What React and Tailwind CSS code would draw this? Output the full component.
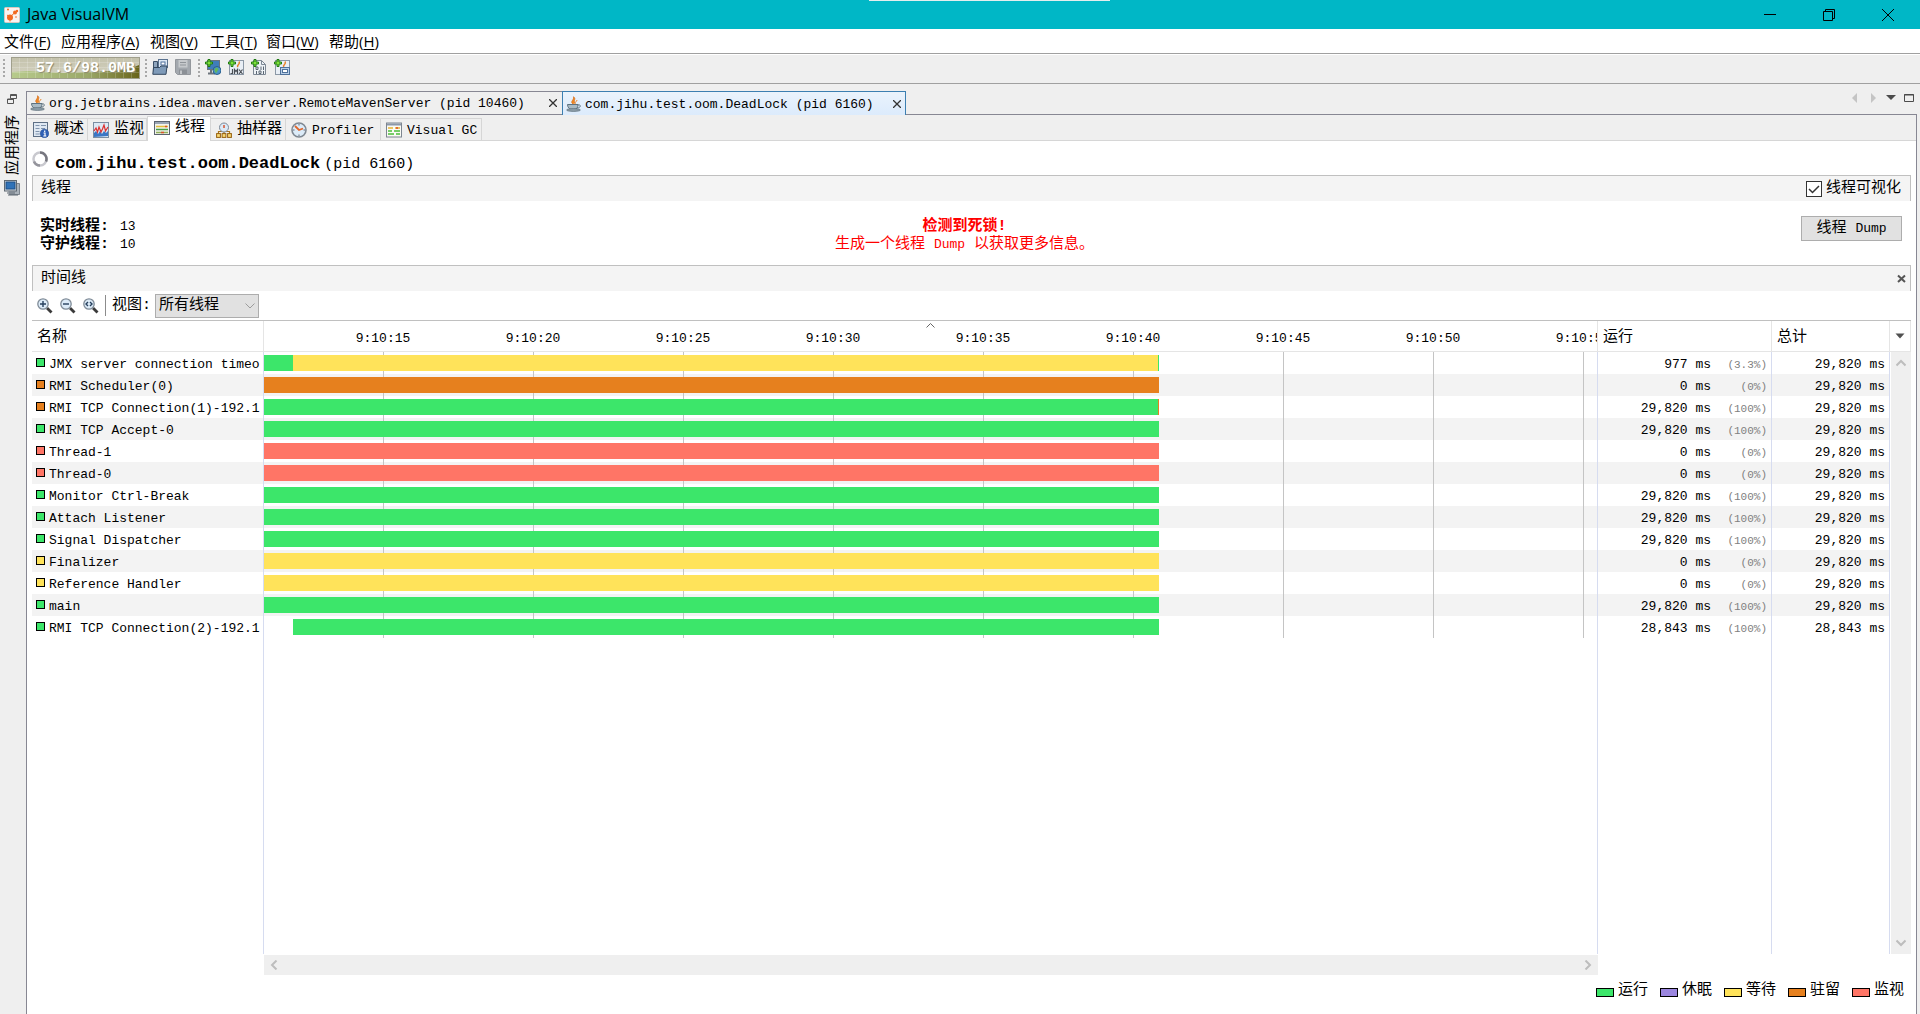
import React from 'react';

const COLORS = {
  run: 'bg-[#3ce66a]',
  sleep: 'bg-[#9b86df]',
  wait: 'bg-[#ffe35a]',
  park: 'bg-[#e6801e]',
  monitor: 'bg-[#ff7566]',
};

const MENUS = [
  ['文件', 'F', 'w-[57px]'],
  ['应用程序', 'A', 'w-[89px]'],
  ['视图', 'V', 'w-[60px]'],
  ['工具', 'T', 'w-[56px]'],
  ['窗口', 'W', 'w-[63px]'],
  ['帮助', 'H', 'w-[60px]'],
];

// seconds on the timeline, 30px each
const PX_PER_SECOND = 30;
const FULL = 895 / PX_PER_SECOND;
const LATE = 29 / PX_PER_SECOND;

const THREADS = [
  { name: 'JMX server connection timeo', state: 'run', bars: [['run', LATE], ['wait', FULL - LATE - 1 / 30], ['run', 1 / 30]], run: '977 ms', pct: '(3.3%)', total: '29,820 ms' },
  { name: 'RMI Scheduler(0)', state: 'park', bars: [['park', FULL]], run: '0 ms', pct: '(0%)', total: '29,820 ms' },
  { name: 'RMI TCP Connection(1)-192.1', state: 'park', bars: [['run', FULL - 1 / 30], ['park', 1 / 30]], run: '29,820 ms', pct: '(100%)', total: '29,820 ms' },
  { name: 'RMI TCP Accept-0', state: 'run', bars: [['run', FULL]], run: '29,820 ms', pct: '(100%)', total: '29,820 ms' },
  { name: 'Thread-1', state: 'monitor', bars: [['monitor', FULL]], run: '0 ms', pct: '(0%)', total: '29,820 ms' },
  { name: 'Thread-0', state: 'monitor', bars: [['monitor', FULL]], run: '0 ms', pct: '(0%)', total: '29,820 ms' },
  { name: 'Monitor Ctrl-Break', state: 'run', bars: [['run', FULL]], run: '29,820 ms', pct: '(100%)', total: '29,820 ms' },
  { name: 'Attach Listener', state: 'run', bars: [['run', FULL]], run: '29,820 ms', pct: '(100%)', total: '29,820 ms' },
  { name: 'Signal Dispatcher', state: 'run', bars: [['run', FULL]], run: '29,820 ms', pct: '(100%)', total: '29,820 ms' },
  { name: 'Finalizer', state: 'wait', bars: [['wait', FULL]], run: '0 ms', pct: '(0%)', total: '29,820 ms' },
  { name: 'Reference Handler', state: 'wait', bars: [['wait', FULL]], run: '0 ms', pct: '(0%)', total: '29,820 ms' },
  { name: 'main', state: 'run', bars: [['run', FULL]], run: '29,820 ms', pct: '(100%)', total: '29,820 ms' },
  { name: 'RMI TCP Connection(2)-192.1', state: 'run', bars: [[null, LATE], ['run', FULL - LATE]], run: '28,843 ms', pct: '(100%)', total: '28,843 ms' },
];

const TICKS = ['9:10:15', '9:10:20', '9:10:25', '9:10:30', '9:10:35', '9:10:40', '9:10:45', '9:10:50', '9:10:55'];

const LEGEND = [
  ['run', '运行'],
  ['sleep', '休眠'],
  ['wait', '等待'],
  ['park', '驻留'],
  ['monitor', '监视'],
];

function Svg({ size = 'size-4', box = '0 0 16 16', children }) {
  return (
    <svg className={`${size} shrink-0`} viewBox={box} fill="none" aria-hidden="true">
      {children}
    </svg>
  );
}

function AppIcon() {
  return (
    <Svg>
      <rect x="0.5" y="0.5" width="15" height="15" rx="1" fill="#f8f4f2" stroke="#d8c8c0" />
      <circle cx="6" cy="10.500" r="3" fill="#f26a21" />
      <circle cx="11" cy="5.500" r="2" fill="#f26a21" />
      <circle cx="4" cy="2.500" r="1" fill="#f26a21" />
      <circle cx="13" cy="4" r="1.200" fill="#f26a21" />
      <circle cx="12" cy="10" r="0.800" fill="#f26a21" />
      <path d="M6 10l5-4.500M6 10L3 8M6 10v4.500" stroke="#f26a21" />
    </Svg>
  );
}

function PlusBadge() {
  return <path d="M3 .5h2V3h2.500v2H5v2.500H3V5H.5V3H3z" fill="#7fe03a" stroke="#1f7a12" />;
}

function OpenIcon() {
  return (
    <Svg>
      <path d="M1.500 14.500v-12h4v7" fill="#8fa5bd" stroke="#3c5068" />
      <rect x="6.500" y="0.500" width="9" height="8" fill="#dce8f5" stroke="#5b7390" />
      <rect x="9" y="3" width="4" height="3" fill="#fff" stroke="#4c6f9c" />
      <path d="M.8 15.300l.7-6.800h6l1.500-1.500h6l-1 8.300z" fill="#7e9ab8" stroke="#33475e" />
    </Svg>
  );
}

function SaveIcon() {
  return (
    <Svg>
      <path d="M.5 .5h15v15h-13l-2-2z" fill="#a3a8ae" stroke="#93979c" />
      <rect x="3.500" y="1" width="9" height="7.500" fill="#c6c9cc" />
      <path d="M5 3.500h6M5 6h6" stroke="#90959a" />
      <rect x="4" y="10.500" width="8" height="4.500" fill="#8b9096" />
      <rect x="5" y="11.500" width="2" height="3.500" fill="#c3c6c9" />
    </Svg>
  );
}

function AddHostIcon() {
  return (
    <Svg>
      <rect x="2.500" y="1.500" width="12" height="9" fill="#3f7dba" stroke="#6c747c" />
      <path d="M3 14.500h7M6 11v3" stroke="#6c747c" strokeWidth="2" />
      <circle cx="12" cy="11.500" r="4" fill="#4a92c9" stroke="#2b5f8c" />
      <path d="M10 9.500l2-1 1.500 2-1.500 2-1 2-1.500-3z" fill="#62b75a" />
      <PlusBadge />
    </Svg>
  );
}

function AddJmxIcon() {
  return (
    <Svg>
      <rect x="1.500" y="1.500" width="14" height="14" fill="#e9eff6" stroke="#8b98a6" />
      <path d="M10 8c-2-2 3-2.500 1-5.500" stroke="#e8822a" strokeWidth="1.500" />
      <path d="M4.500 10v4.500h-2M6.500 15v-4.500l1.500 2 1.500-2V15M11 10.500l3.500 4.500M14.500 10.500L11 15" stroke="#4a4f55" strokeWidth="1.200" />
      <PlusBadge />
    </Svg>
  );
}

function AddDumpIcon() {
  return (
    <Svg>
      <path d="M2.500 1.500h8l4 4v10h-12z" fill="#eef2f6" stroke="#7d8894" />
      <path d="M10.500 1.500v4h4" stroke="#7d8894" />
      <path d="M5 8v2.500h2V8zM10 7.500v3.500M12.500 7.500v3.500M5.500 12v3M8 12v2.500h2V12zM12.500 12v3" stroke="#5a6673" />
      <PlusBadge />
    </Svg>
  );
}

function AddSnapshotIcon() {
  return (
    <Svg>
      <rect x="1.500" y="1.500" width="14" height="14" fill="#e9eff6" stroke="#8b98a6" />
      <path d="M10 8c-2-2 3-2.500 1-5.500" stroke="#e8822a" strokeWidth="1.500" />
      <rect x="6.500" y="8.500" width="9" height="7" fill="#b8cfe8" stroke="#4f719b" />
      <rect x="8.500" y="10.500" width="5" height="3" fill="#fff" stroke="#4f719b" />
      <PlusBadge />
    </Svg>
  );
}

function JavaIcon() {
  return (
    <Svg>
      <path d="M7 8C3.500 5.500 8.500 4 7.500 .8c3 2-.5 3.500 1.500 6.700" fill="#f08a24" stroke="#d9701a" strokeWidth="0.800" />
      <path d="M9.500 7.500c-1-1.500 1.500-2 1.500-3.500" stroke="#e8822a" />
      <path d="M1.500 8.500h10.500c0 3-1.500 4.500-3 5H5c-1.500-.5-3.500-2-3.500-5z" fill="#a9bac4" stroke="#5d7280" />
      <path d="M12 9c3.500-.8 3 3-1 3" stroke="#5d7280" />
      <ellipse cx="7.500" cy="14" rx="7" ry="1.500" fill="#8a9ba6" stroke="#566874" strokeWidth="0.600" />
    </Svg>
  );
}

function OverviewIcon() {
  return (
    <Svg>
      <rect x="0.500" y="0.500" width="14" height="14" fill="#dfe8f2" stroke="#5d6f85" />
      <path d="M2.500 3.500h4M2.500 6.500h4M2.500 9.500h4M2.500 12h4M8 3.500h5M8 6.500h4" stroke="#8094ad" />
      <circle cx="11.500" cy="11.500" r="4.300" fill="#2e5fb5" stroke="#1d428a" strokeWidth="0.500" />
      <path d="M11.700 8.500v1.500M10.500 11h1.500v3M10.300 14h3" stroke="#fff" strokeWidth="1.200" />
    </Svg>
  );
}

function MonitorIcon() {
  return (
    <Svg>
      <rect x="0.500" y="0.500" width="15" height="15" fill="#dce9f5" stroke="#7b8ea3" />
      <path d="M1 15v-4l2-2 2 3 2-3 2 3 2-3 2 2 2-2v5z" fill="#3b76c4" />
      <path d="M1 9l2-3 1.500 4L6 5l2 5 1.500-3L11 3l1.500 6L15 5" stroke="#dd2f2f" strokeWidth="1.200" />
    </Svg>
  );
}

function ThreadsIcon() {
  return (
    <Svg>
      <rect x="0.500" y="1.500" width="15" height="13" fill="#f3f3ee" stroke="#5c6470" />
      <path d="M1 3h14" stroke="#9aa6b5" strokeWidth="2" />
      <path d="M2 6.500h12" stroke="#e3bd3b" strokeWidth="1.500" />
      <path d="M2 9.500h12" stroke="#43a047" strokeWidth="1.500" />
      <path d="M2 12.500h12" stroke="#8fae5a" strokeWidth="1.500" />
      <path d="M7 12.500h3M11 6.500h2" stroke="#d9532c" strokeWidth="1.500" />
    </Svg>
  );
}

function SamplerIcon() {
  return (
    <Svg>
      <path d="M2.500 12V9.500h11V12M8 8v4" stroke="#a8741d" strokeWidth="1.200" />
      <circle cx="8" cy="5.500" r="4.500" fill="#dbe9f6" stroke="#7c8998" />
      <path d="M8 3v3" stroke="#d9532c" strokeWidth="1.500" />
      <rect x="0.600" y="11.600" width="3.800" height="3.800" fill="#f7d774" stroke="#96600f" />
      <rect x="6.100" y="11.600" width="3.800" height="3.800" fill="#f7d774" stroke="#96600f" />
      <rect x="11.600" y="11.600" width="3.800" height="3.800" fill="#f7d774" stroke="#96600f" />
    </Svg>
  );
}

function ProfilerIcon() {
  return (
    <Svg>
      <circle cx="8" cy="8" r="7" fill="#dcebf8" stroke="#7f8892" strokeWidth="1.600" />
      <path d="M8 2v1.500M8 12.500V14M2 8h1.500M12.500 8H14" stroke="#5e6975" />
      <path d="M4 4l4 4 4-1.500" stroke="#e0662a" strokeWidth="1.800" />
    </Svg>
  );
}

function VisualGcIcon() {
  return (
    <Svg>
      <rect x="0.500" y="1" width="15" height="14" fill="#fafaf5" stroke="#7d8590" />
      <path d="M1 2.500h14" stroke="#8b97a8" strokeWidth="2" />
      <path d="M2 6h5M9 6h5" stroke="#e8b530" strokeWidth="1.500" />
      <path d="M2 9h4M8 9h6" stroke="#4bbf3a" strokeWidth="1.500" />
      <path d="M2 12h6M10 12h4" stroke="#4bbf3a" strokeWidth="1.500" />
      <path d="M10 6h2" stroke="#e04a2a" strokeWidth="1.500" />
    </Svg>
  );
}

function ComputerIcon() {
  return (
    <Svg>
      <path d="M3 3.500h12.500v11H5" fill="#aab2ba" stroke="#7d858e" />
      <rect x="0.500" y="0.500" width="12" height="10.500" fill="#d5dade" stroke="#5f6972" />
      <rect x="2" y="2" width="9" height="7" fill="#2f72b8" stroke="#1e4f86" />
      <path d="M3 13h8M4 15h10" stroke="#5f6972" />
    </Svg>
  );
}

function ZoomIcon({ d }) {
  return (
    <Svg>
      <path d="M10 10l4.500 4.500" stroke="#3a3a3a" strokeWidth="2.800" />
      <circle cx="6" cy="6" r="5.200" fill="#dcebf8" stroke="#7f8b97" strokeWidth="1.300" />
      <path d={d} stroke="#26405e" strokeWidth="1.400" />
    </Svg>
  );
}

function Grip({ className }) {
  return (
    <div className={`h-[19px] w-[2px] shrink-0 bg-[linear-gradient(#a8a8a8_2px,transparent_2px)] bg-size-[2px_4px] ${className}`} />
  );
}

function HeapMeter() {
  return (
    <div className="relative h-[22px] w-[129px] border border-[#a09f8c]">
      <svg className="block size-full" viewBox="0 0 127 20" preserveAspectRatio="none" aria-hidden="true">
        <defs>
          <linearGradient id="heapBack" x1="0" y1="0" x2="0" y2="1">
            <stop offset="0" stopColor="#c4c2ac" />
            <stop offset="1" stopColor="#d6d4c3" />
          </linearGradient>
          <linearGradient id="heapFill" x1="0" y1="0" x2="1" y2="0">
            <stop offset="0" stopColor="#b7ca8c" />
            <stop offset="0.600" stopColor="#9ba868" />
            <stop offset="1" stopColor="#69641a" />
          </linearGradient>
        </defs>
        <rect width="127" height="20" fill="url(#heapBack)" />
        <path d="M0 14l16-1 16 1 20 1 24-1 22-1 14-1 8-2 7-3v13H0z" fill="url(#heapFill)" />
        <path d="M7.500 0v20M15.500 0v20M23.500 0v20M31.500 0v20M39.500 0v20M47.500 0v20M55.500 0v20M63.500 0v20M71.500 0v20M79.500 0v20M87.500 0v20M95.500 0v20M103.500 0v20M111.500 0v20M119.500 0v20M0 4.500h127M0 9.500h127M0 14.500h127" stroke="#fff" strokeOpacity="0.180" />
      </svg>
      <span className="absolute inset-y-0 right-[4px] text-[15px] leading-[22px] font-bold text-white [text-shadow:1px_1px_1px_#8a886c]">57.6/98.0MB</span>
    </div>
  );
}

function TitleBar() {
  return (
    <header className="relative flex h-[29px] items-center bg-[#00b7c6] pl-1">
      <div className="absolute top-0 left-[869px] h-px w-[241px] bg-[#e4eeee]" />
      <AppIcon />
      <h1 className="ml-[7px] pb-[2px] font-['Open_Sans'] text-[16px] leading-5">Java VisualVM</h1>
      <div className="ml-auto flex pr-[3px]">
        <button aria-label="最小化" className="flex h-[28px] w-[59px] items-center justify-center">
          <Svg size="size-3" box="0 0 12 12"><path d="M0 5.500h12" stroke="#000" /></Svg>
        </button>
        <button aria-label="还原" className="flex h-[28px] w-[59px] items-center justify-center">
          <Svg size="size-3" box="0 0 12 12"><path d="M.5 2.500h9v9h-9zM2.500 2.500v-2h9v9h-2" stroke="#000" /></Svg>
        </button>
        <button aria-label="关闭" className="flex h-[28px] w-[59px] items-center justify-center">
          <Svg size="size-3" box="0 0 12 12"><path d="M0 0l12 12M12 0L0 12" stroke="#000" /></Svg>
        </button>
      </div>
    </header>
  );
}

function MenuBar() {
  return (
    <nav className="flex h-[25px] items-center border-b border-[#a0a0a0] bg-white pl-1 font-['Open_Sans','Noto_Sans_CJK_SC',sans-serif] text-[15px] leading-5">
      {MENUS.map(([label, key, width]) => (
        <button key={key} className={`text-left whitespace-nowrap ${width}`}>
          {label}(<u className="underline-offset-2">{key}</u>)
        </button>
      ))}
    </nav>
  );
}

function Toolbar() {
  return (
    <div className="flex h-[30px] items-start border-t border-b border-t-white border-b-[#a0a0a0] pt-[2px]">
      <Grip className="mt-[2px] ml-[3px]" />
      <div className="ml-[6px]"><HeapMeter /></div>
      <Grip className="mt-[2px] ml-[5px]" />
      <div className="mt-[2px] ml-[5px] flex gap-[7px]">
        <button aria-label="打开"><OpenIcon /></button>
        <button aria-label="保存" disabled><SaveIcon /></button>
      </div>
      <Grip className="mt-[2px] ml-[7px]" />
      <div className="mt-[2px] ml-[5px] flex gap-[7px]">
        <button aria-label="添加远程主机"><AddHostIcon /></button>
        <button aria-label="添加 JMX 连接"><AddJmxIcon /></button>
        <button aria-label="添加转储"><AddDumpIcon /></button>
        <button aria-label="添加快照"><AddSnapshotIcon /></button>
      </div>
    </div>
  );
}

function SideRail() {
  return (
    <aside className="flex w-[26px] shrink-0 flex-col items-start pt-[10px] pl-1">
      <button aria-label="还原窗口" className="ml-[3px]">
        <Svg size="size-[10px]" box="0 0 10 10">
          <path d="M3.500 .5h6v4h-6zM3.500 1.500h6" stroke="#555" />
          <path d="M.5 5h6v4.500h-6zM.5 5.500h6" fill="#efefef" stroke="#555" />
        </Svg>
      </button>
      <button className="mt-[11px] rotate-180 text-[15px] leading-5 [text-orientation:sideways] [writing-mode:vertical-rl]">应用程序</button>
      <button aria-label="应用程序" className="mt-[5px]"><ComputerIcon /></button>
    </aside>
  );
}

function CloseX() {
  return (
    <Svg size="size-2" box="0 0 8 8"><path d="M0 0l8 8M8 0L0 8" stroke="#333" strokeWidth="1.300" /></Svg>
  );
}

function DocumentTabs() {
  return (
    <div className="flex h-[31px] items-end">
      <div className="flex h-[24px] w-[536px] items-center border-t border-b border-l border-[#878793] bg-[#efefef] pl-[3px]">
        <JavaIcon />
        <button className="ml-[3px] pt-[2px] whitespace-nowrap">org.jetbrains.idea.maven.server.RemoteMavenServer (pid 10460)</button>
        <button aria-label="关闭" className="mr-[5px] ml-auto"><CloseX /></button>
      </div>
      <div className="flex h-[24px] w-[344px] items-center border-t border-r border-l border-[#3c7fb1] bg-linear-to-b from-[#eaf3fc] to-[#dcebfc] pl-[3px]">
        <JavaIcon />
        <button className="ml-[3px] pt-[2px] whitespace-nowrap">com.jihu.test.oom.DeadLock (pid 6160)</button>
        <button aria-label="关闭" className="mr-1 ml-auto"><CloseX /></button>
      </div>
      <div className="flex h-[31px] flex-1 items-start justify-end gap-2 border-b border-[#878793] pt-[9px] pr-[3px]">
        <button aria-label="向左滚动"><Svg size="size-[10px]" box="0 0 10 10"><path d="M7 0v10L2 5z" fill="#c4c4c4" /></Svg></button>
        <button aria-label="向右滚动"><Svg size="size-[10px]" box="0 0 10 10"><path d="M3 0v10l5-5z" fill="#c4c4c4" /></Svg></button>
        <button aria-label="文档列表"><Svg size="size-[10px]" box="0 0 10 10"><path d="M0 2h10L5 7z" fill="#4b4b4b" /></Svg></button>
        <button aria-label="最大化"><Svg size="size-[10px]" box="0 0 10 10"><path d="M.5 1.500h9v7h-9zM0 2h10" stroke="#4b4b4b" /></Svg></button>
      </div>
    </div>
  );
}

function SubTab({ icon, width, children }) {
  return (
    <button className={`flex h-[23px] items-center gap-[5px] border-t border-r border-b border-[#d6d6d6] pl-[5px] whitespace-nowrap ${width}`}>
      {icon}
      {children}
    </button>
  );
}

function SubTabs() {
  return (
    <div className="flex h-[26px] items-end bg-[#efefef] pl-px">
      <SubTab icon={<OverviewIcon />} width="w-[60px]"><span className="text-[15px]">概述</span></SubTab>
      <SubTab icon={<MonitorIcon />} width="w-[59px]"><span className="text-[15px]">监视</span></SubTab>
      <button className="flex h-[25px] w-[64px] items-start gap-[5px] border-t border-r border-l border-[#d6d6d6] bg-white pt-[3px] pl-[6px] text-[15px] leading-4 whitespace-nowrap">
        <ThreadsIcon />
        线程
      </button>
      <SubTab icon={<SamplerIcon />} width="w-[75px]"><span className="text-[15px]">抽样器</span></SubTab>
      <SubTab icon={<ProfilerIcon />} width="w-[95px]"><span className="pt-[2px]">Profiler</span></SubTab>
      <SubTab icon={<VisualGcIcon />} width="w-[101px]"><span className="pt-[2px]">Visual GC</span></SubTab>
      <div className="flex-1 border-b border-[#d6d6d6]" />
    </div>
  );
}

function SectionHeader({ title, children }) {
  return (
    <div className="flex h-[26px] shrink-0 items-center justify-between border-t border-r border-l border-[#c0c0c0] bg-[#f4f4f4] pl-[8px]">
      <h3 className="text-[15px] leading-5">{title}</h3>
      {children}
    </div>
  );
}

function ThreadSummary() {
  return (
    <section className="grid h-[64px] shrink-0 grid-cols-[1fr_auto_1fr] items-start leading-[18px]">
      <dl className="mt-[17px] ml-[8px] grid grid-cols-[80px_auto] justify-start">
        <dt className="text-[15px] font-bold">实时线程:</dt>
        <dd>13</dd>
        <dt className="text-[15px] font-bold">守护线程:</dt>
        <dd>10</dd>
      </dl>
      <div role="alert" className="mt-[17px] mr-[14px] text-center text-[15px] text-[#f00]">
        <p className="font-bold">检测到死锁!</p>
        <p>生成一个线程 <span className="text-[13px]">Dump</span> 以获取更多信息。</p>
      </div>
      <button className="mt-[15px] mr-[9px] h-[25px] w-[101px] justify-self-end border border-[#adadad] bg-[#e1e1e1] text-[15px]">
        线程 <span className="text-[13px]">Dump</span>
      </button>
    </section>
  );
}

function TimelineToolbar() {
  return (
    <div className="flex h-[29px] shrink-0 items-center pl-[5px]">
      <div className="flex gap-[7px]">
        <button aria-label="放大"><ZoomIcon d="M3 6h6M6 3v6" /></button>
        <button aria-label="缩小"><ZoomIcon d="M3 6h6" /></button>
        <button aria-label="适合窗口"><ZoomIcon d="M5 4L3 6l2 2M7 4l2 2-2 2" /></button>
      </div>
      <div className="ml-[6px] h-[21px] w-px bg-[#8c8c8c]" />
      <label htmlFor="thread-filter" className="ml-[6px] w-[43px] text-[15px]">视图:</label>
      <div className="relative w-[104px]">
        <select id="thread-filter" className="block h-[24px] w-full appearance-none border border-[#adadad] bg-[#e1e1e1] pl-[3px] text-[15px] leading-5">
          <option>所有线程</option>
        </select>
        <div className="pointer-events-none absolute top-[9px] right-1">
          <Svg size="h-[6px] w-[10px]" box="0 0 10 6"><path d="M.5 .5L5 5l4.500-4.500" stroke="#9c9c9c" /></Svg>
        </div>
      </div>
    </div>
  );
}

function ThreadRow({ thread, odd, children }) {
  return (
    <tr className={`h-[22px] ${odd ? 'bg-[#f3f3f3]' : 'bg-white'}`}>
      <td className="overflow-hidden border-r border-[#d6dcf0] p-0">
        <div className="flex h-[22px] items-start pl-1 whitespace-nowrap">
          <span className={`mt-[6px] mr-1 size-[9px] shrink-0 border border-black ${COLORS[thread.state]}`} />
          <span className="pt-[5px]">{thread.name}</span>
        </div>
      </td>
      <td className="overflow-hidden border-r border-[#d6dcf0] bg-[linear-gradient(to_right,#c4c4c4_1px,transparent_1px)] bg-size-[150px_100%] bg-position-[119px_0] p-0">
        <div className="flex">
          {thread.bars.map(([state, seconds], i) => (
            <div key={i} className={`h-4 shrink-0 ${state ? COLORS[state] : ''}`} style={{ width: Math.round(seconds * PX_PER_SECOND) }} />
          ))}
        </div>
      </td>
      <td className="border-r border-[#d6dcf0] p-0 pr-1">
        <div className="flex justify-end pt-[3px]">
          {thread.run}
          <span className="w-[56px] text-right text-[11px] text-[#808080]">{thread.pct}</span>
        </div>
      </td>
      <td className="border-r border-[#d6dcf0] p-0 pt-[3px] pr-1 text-right">{thread.total}</td>
      {children}
    </tr>
  );
}

function ThreadTable() {
  return (
    <div className="min-h-0 flex-1 border-t border-[#c0c0c0]">
      <table className="h-full w-full table-fixed border-separate border-spacing-0">
        <colgroup>
          <col className="w-[232px]" />
          <col />
          <col className="w-[174px]" />
          <col className="w-[118px]" />
          <col className="w-[21px]" />
        </colgroup>
        <thead>
          <tr className="h-[31px] text-[15px]">
            <th className="border-r border-b border-[#e5e5e5] p-0 pt-[3px] pl-[5px] text-left font-normal">名称</th>
            <th className="relative overflow-hidden border-r border-b border-[#e5e5e5] p-0 text-[13px] font-normal">
              <div className="absolute inset-x-0 top-[2px] flex justify-center">
                <Svg size="h-[5px] w-[9px]" box="0 0 9 5"><path d="M.5 4.500l4-4 4 4" stroke="#666" /></Svg>
              </div>
              <div className="ml-[44px] flex overflow-hidden pt-[6px]">
                {TICKS.map(t => <span key={t} className="w-[150px] shrink-0 text-center">{t}</span>)}
              </div>
            </th>
            <th className="border-r border-b border-[#e5e5e5] p-0 pt-[3px] pl-[5px] text-left font-normal">运行</th>
            <th className="border-r border-b border-[#e5e5e5] p-0 pt-[3px] pl-[5px] text-left font-normal">总计</th>
            <th className="border-r border-b border-[#e5e5e5] p-0">
              <button aria-label="选择列" className="mx-auto block">
                <Svg size="h-[6px] w-[10px]" box="0 0 10 6"><path d="M.5 .5h9L5 5.500z" fill="#505050" /></Svg>
              </button>
            </th>
          </tr>
        </thead>
        <tbody>
          {THREADS.map((thread, i) => (
            <ThreadRow key={thread.name} thread={thread} odd={i % 2 === 1}>
              {i === 0 && (
                <td rowSpan={THREADS.length + 1} className="h-full border-l border-white bg-[#efefef] p-0 align-top">
                  <div className="flex h-full flex-col items-center justify-between py-[7px]">
                    <Svg size="h-[8px] w-[10px]" box="0 0 10 8"><path d="M.5 6.500L5 2l4.500 4.500" stroke="#bdbdbd" strokeWidth="2" /></Svg>
                    <Svg size="h-[8px] w-[10px]" box="0 0 10 8"><path d="M.5 1.500L5 6l4.500-4.500" stroke="#bdbdbd" strokeWidth="2" /></Svg>
                  </div>
                </td>
              )}
            </ThreadRow>
          ))}
          <tr className="h-full">
            <td className="border-r border-[#d6dcf0]" />
            <td className="border-r border-[#d6dcf0]" />
            <td className="border-r border-[#d6dcf0]" />
            <td className="border-r border-[#d6dcf0]" />
          </tr>
        </tbody>
      </table>
    </div>
  );
}

function HorizontalScroll() {
  return (
    <div className="mt-px mr-[313px] ml-[232px] flex h-[20px] shrink-0 items-center justify-between bg-[#efefef] px-[6px]">
      <Svg size="h-[10px] w-[8px]" box="0 0 8 10"><path d="M6.500 .5L2 5l4.500 4.500" stroke="#bdbdbd" strokeWidth="2" /></Svg>
      <Svg size="h-[10px] w-[8px]" box="0 0 8 10"><path d="M1.500 .5L6 5 1.500 9.500" stroke="#bdbdbd" strokeWidth="2" /></Svg>
    </div>
  );
}

function Legend() {
  return (
    <ul className="flex h-[39px] shrink-0 items-start justify-end gap-3 pt-[6px] pr-[7px] text-[15px] leading-5">
      {LEGEND.map(([state, label]) => (
        <li key={state} className="flex items-center gap-1">
          <span className={`mt-[2px] h-[9px] w-[18px] border border-black ${COLORS[state]}`} />
          {label}
        </li>
      ))}
    </ul>
  );
}

export default function App() {
  return (
    <div className="flex h-screen flex-col overflow-hidden bg-[#efefef] font-['Liberation_Mono','Noto_Sans_CJK_SC',monospace] text-[13px] leading-4 text-black">
      <TitleBar />
      <MenuBar />
      <Toolbar />
      <div className="flex min-h-0 flex-1">
        <SideRail />
        <div className="flex min-w-0 flex-1 flex-col pr-[3px]">
          <DocumentTabs />
          <main className="flex min-h-0 flex-1 flex-col border-r border-l border-[#878793] bg-white">
            <SubTabs />
            <div className="flex min-h-0 flex-1 flex-col pr-[5px] pl-[5px]">
              <div className="flex h-[34px] shrink-0 items-start gap-[7px] pt-[10px]">
                <Svg>
                  <circle cx="8" cy="8" r="6.500" stroke="#c9c9cf" strokeWidth="2.500" />
                  <path d="M8 1.500a6.500 6.500 0 0 1 6 9" stroke="#77777f" strokeWidth="2.500" />
                  <path d="M8 14.500a6.500 6.500 0 0 1-6-4" stroke="#94949c" strokeWidth="2.500" />
                </Svg>
                <h2 className="pt-[3px] text-[17px] leading-5 font-bold">com.jihu.test.oom.DeadLock<span className="ml-1 text-[15px] font-normal">(pid 6160)</span></h2>
              </div>
              <SectionHeader title="线程">
                <label className="flex items-center gap-[4px] pr-[9px] text-[15px] leading-5">
                  <span className="relative flex size-4">
                    <input type="checkbox" defaultChecked className="peer size-4 appearance-none border border-[#333] bg-white" />
                    <svg className="pointer-events-none absolute inset-0 hidden size-4 peer-checked:block" viewBox="0 0 16 16" fill="none" aria-hidden="true">
                      <path d="M3 8l3.500 3.500L13 5" stroke="#333" strokeWidth="1.500" />
                    </svg>
                  </span>
                  线程可视化
                </label>
              </SectionHeader>
              <ThreadSummary />
              <SectionHeader title="时间线">
                <button aria-label="关闭时间线" className="mr-1">
                  <Svg size="size-[9px]" box="0 0 9 9"><path d="M1 1.500l7 6.500M8 1.500L1 8" stroke="#555" strokeWidth="2" /></Svg>
                </button>
              </SectionHeader>
              <TimelineToolbar />
              <ThreadTable />
              <HorizontalScroll />
              <Legend />
            </div>
          </main>
        </div>
      </div>
    </div>
  );
}
